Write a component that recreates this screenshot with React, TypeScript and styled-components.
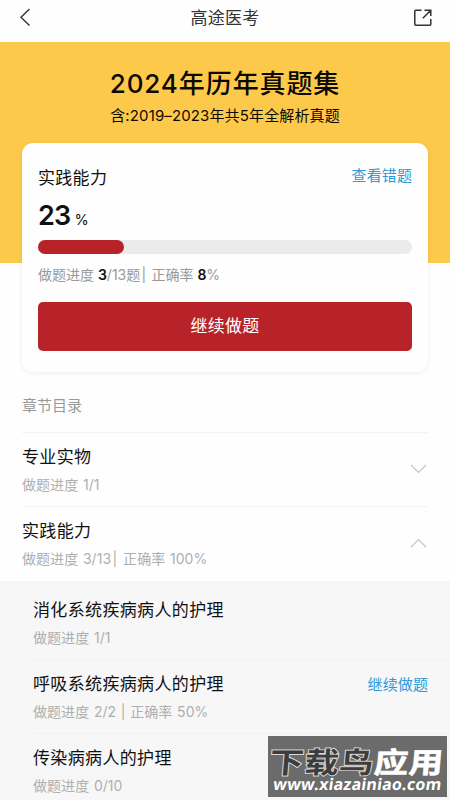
import React from "react";
import styled, { createGlobalStyle } from "styled-components";

const GlobalStyle = createGlobalStyle`
  * { box-sizing: border-box; }
  html, body { margin: 0; padding: 0; }
  body {
    background: #fefefe;
    color: #111;
    font-family: Inter, "Noto Sans CJK SC", sans-serif;
    overflow: hidden;
  }
  button { font: inherit; border: 0; padding: 0; background: none; color: inherit; }
  h1, h2, h3, p { margin: 0; font-weight: 400; }
`;

const Screen = styled.main`
  position: relative;
  width: 450px;
  height: 800px;
  overflow: hidden;
  background: #fefefe;
`;

const Header = styled.header`
  display: grid;
  grid-template-columns: 60px 1fr 60px;
  align-items: center;
  height: 42px;
  padding-bottom: 6px;
`;

const HeaderTitle = styled.h1`
  text-align: center;
  font-size: 17px;
  line-height: 24px;
  letter-spacing: 0.3px;
  color: #333;
`;

const IconButton = styled.button<{ $end?: boolean }>`
  display: flex;
  justify-content: ${(p) => (p.$end ? "flex-end" : "flex-start")};
  padding: ${(p) => (p.$end ? "0 17px 0 0" : "0 0 0 18px")};
`;

const Hero = styled.section`
  display: flex;
  flex-direction: column;
  align-items: center;
  height: 220.5px;
  padding-top: 23px;
  background: #fdc94b;
  color: #0c0903;
  white-space: nowrap;
`;

const HeroTitle = styled.h2`
  font-size: 26px;
  font-weight: 500;
  line-height: 38px;
  letter-spacing: 0.9px;
`;

const HeroNote = styled.p`
  margin-top: 2px;
  font-size: 15px;
  line-height: 22px;
  letter-spacing: 0.13px;
`;

const Card = styled.section`
  position: relative;
  width: 406px;
  height: 229px;
  margin: -119.5px auto 0;
  padding: 22px 16px 0;
  border-radius: 11px;
  background: #fefefe;
  box-shadow: 0 1px 5px rgba(0, 0, 0, 0.07);
`;

const CardHead = styled.div`
  display: flex;
  justify-content: space-between;
  height: 24px;
  line-height: 24px;
`;

const CardTitle = styled.h3`
  padding-top: 1px;
  font-size: 17px;
  letter-spacing: 0.3px;
`;

const TextLink = styled.button<{ $drop?: number }>`
  height: 22px;
  margin-top: ${(p) => p.$drop ?? 0}px;
  font-size: 15px;
  line-height: 22px;
  letter-spacing: 0.1px;
  color: #2f9bdb;
`;

const Percent = styled.div`
  display: flex;
  align-items: baseline;
  gap: 4px;
  height: 32px;
  margin-top: 11px;
  font-size: 14.5px;
  line-height: 32px;
`;

const PercentValue = styled.strong`
  font-size: 27px;
  font-weight: 600;
  letter-spacing: -0.7px;
`;

const Track = styled.div`
  height: 14px;
  margin-top: 8px;
  border-radius: 7px;
  background: #ebebeb;
`;

const Fill = styled.div`
  height: 14px;
  border-radius: 7px;
  background: #b82329;
`;

const Stats = styled.p<{ $dark?: boolean }>`
  height: 20px;
  font-size: 14px;
  line-height: 20px;
  letter-spacing: ${(p) => (p.$dark ? 0 : 0.05)}px;
  word-spacing: ${(p) => (p.$dark ? 0 : 0.7)}px;
  white-space: pre;
  color: ${(p) => (p.$dark ? "#999" : "#afafaf")};
  b { font-weight: 600; color: #111; }
`;

const Divider = styled.span`
  margin: 0 1.3px;
`;

const CardStats = styled.div`
  margin-top: 11px;
`;

const Primary = styled.button`
  display: block;
  width: 100%;
  height: 48.5px;
  margin-top: 17px;
  border-radius: 5px;
  background: #b82329;
  color: #fff;
  font-size: 17px;
  letter-spacing: 0.3px;
  line-height: 49px;
`;

const SectionLabel = styled.p`
  height: 60px;
  margin: 0 22px;
  padding-top: 23px;
  font-size: 15px;
  line-height: 22px;
  color: #999;
`;

const Row = styled.div<{ $nested?: boolean }>`
  display: flex;
  justify-content: space-between;
  height: 74px;
  margin-left: ${(p) => (p.$nested ? 33 : 22)}px;
  margin-right: ${(p) => (p.$nested ? 0 : 22)}px;
  padding-top: 12px;
  padding-right: ${(p) => (p.$nested ? 22 : 0)}px;
  border-top: 1px solid ${(p) => (p.$nested ? "#f1f1f1" : "#f3f3f3")};
`;

const RowTitle = styled.h3`
  height: 24px;
  margin-bottom: 6px;
  font-size: 17px;
  line-height: 24px;
  letter-spacing: 0.35px;
`;

const Chevron = styled.svg<{ $up?: boolean }>`
  width: 19px;
  height: 12px;
  margin-top: 18px;
  transform: ${(p) => (p.$up ? "rotate(180deg)" : "none")};
`;

const Nested = styled.div`
  height: 220px;
  margin-top: 1px;
  background: #f7f7f7;
  padding-top: 4px;

  & > :first-child { border-top-color: transparent; }
`;

const Watermark = styled.aside`
  position: absolute;
  left: 268px;
  top: 736px;
  width: 179px;
  height: 61px;
  background: #6b6b6b;
  color: #fff;
  text-align: center;
  white-space: nowrap;
`;

const MarkName = styled.div`
  display: flex;
  justify-content: center;
  height: 37px;
  padding-top: 5px;
  font-family: "Noto Sans CJK SC", sans-serif;
  font-size: 29px;
  font-weight: 700;
  line-height: 38px;
  letter-spacing: 0.5px;
  transform: skewX(-5deg) scaleX(1.18);
`;

const MarkDark = styled.span`
  color: #3d3d3d;
  -webkit-text-stroke: 1.8px #d8d8d8;
  paint-order: stroke fill;
`;

const MarkLight = styled.span`
  -webkit-text-stroke: 0.6px #fff;
`;

const MarkSite = styled.div`
  display: flex;
  justify-content: center;
  font-family: "Noto Sans", sans-serif;
  font-size: 16px;
  font-weight: 700;
  line-height: 22px;
  letter-spacing: 0.25px;
  transform: skewX(-8deg);
`;

const sections = [
  { title: "专业实物", progress: "做题进度 1/1", rate: "", open: false },
  { title: "实践能力", progress: "做题进度 3/13", rate: " 正确率 100%", open: true },
];

const chapters = [
  { title: "消化系统疾病病人的护理", stats: "做题进度 1/1" },
  { title: "呼吸系统疾病病人的护理", stats: "做题进度 2/2 | 正确率 50%", action: "继续做题" },
  { title: "传染病病人的护理", stats: "做题进度 0/10" },
];

export default function App() {
  const percent = 23;
  return (
    <Screen>
      <GlobalStyle />
      <Header>
        <IconButton aria-label="返回">
          <svg width="14" height="20" viewBox="0 0 14 20" fill="none" stroke="#333" strokeWidth="1.4">
            <path d="M11.5 1 3 9.300l8.500 8.300" />
          </svg>
        </IconButton>
        <HeaderTitle>高途医考</HeaderTitle>
        <IconButton $end aria-label="分享">
          <svg width="20" height="20" viewBox="0 0 20 20" fill="none" stroke="#333" strokeWidth="1.5">
            <path d="M8.500 2.300H2.800Q1.800 2.300 1.800 3.300V16.200Q1.800 17.200 2.800 17.200H16.800Q17.800 17.200 17.800 16.200V11M11.500 2.300H17.800V8M17.800 2.300L9.800 10.300" />
          </svg>
        </IconButton>
      </Header>

      <Hero>
        <HeroTitle>2024年历年真题集</HeroTitle>
        <HeroNote>含:2019–2023年共5年全解析真题</HeroNote>
      </Hero>

      <Card>
        <CardHead>
          <CardTitle>实践能力</CardTitle>
          <TextLink>查看错题</TextLink>
        </CardHead>
        <Percent>
          <PercentValue>{percent}</PercentValue>%
        </Percent>
        <Track>
          <Fill style={{ width: `${percent}%` }} />
        </Track>
        <CardStats>
          <Stats $dark>
            做题进度 <b>3</b>/13题<Divider>|</Divider> 正确率 <b>8</b>%
          </Stats>
        </CardStats>
        <Primary>继续做题</Primary>
      </Card>

      <SectionLabel>章节目录</SectionLabel>

      {sections.map((s) => (
        <Row key={s.title}>
          <div>
            <RowTitle>{s.title}</RowTitle>
            <Stats>
              {s.progress}
              {s.rate && <Divider>|</Divider>}
              {s.rate}
            </Stats>
          </div>
          <Chevron $up={s.open} viewBox="0 0 19 12" fill="none" stroke="#c4c4c4" strokeWidth="1.2">
            <path d="M2 2l7.500 7.500L17 2" />
          </Chevron>
        </Row>
      ))}

      <Nested>
        {chapters.map((c) => (
          <Row key={c.title} $nested>
            <div>
              <RowTitle>{c.title}</RowTitle>
              <Stats>{c.stats}</Stats>
            </div>
            {c.action && <TextLink $drop={2}>{c.action}</TextLink>}
          </Row>
        ))}
      </Nested>

      <Watermark>
        <MarkName>
          <MarkDark>下载鸟</MarkDark>
          <MarkLight>应用</MarkLight>
        </MarkName>
        <MarkSite>www.xiazainiao.com</MarkSite>
      </Watermark>
    </Screen>
  );
}
